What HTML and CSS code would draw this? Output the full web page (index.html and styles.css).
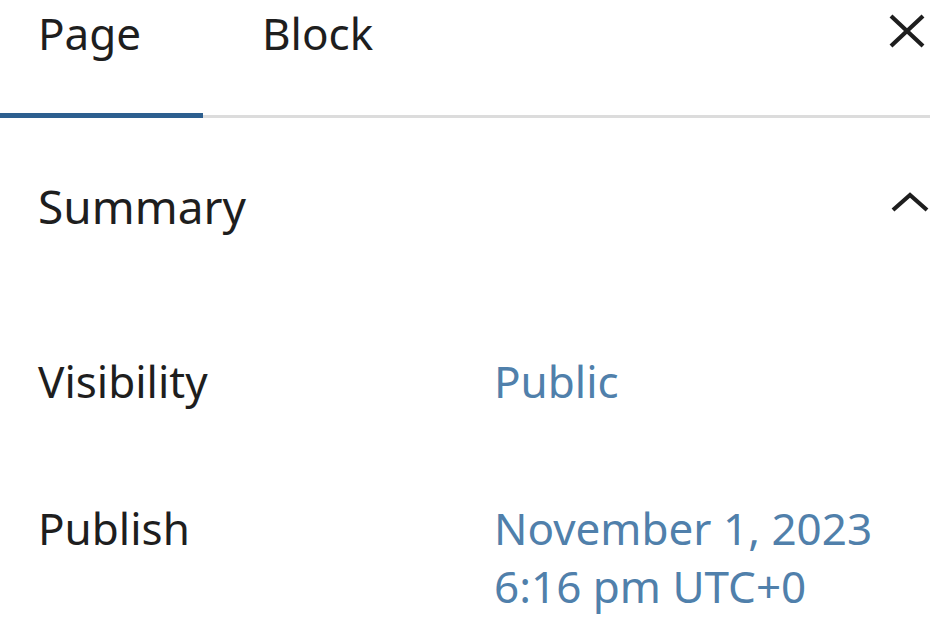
FILE: index.html
```html
<!DOCTYPE html>
<html lang="en">
<head>
  <meta charset="UTF-8" /><meta name="viewport" content="width=device-width, initial-scale=1.0"/>
  <title>Page settings</title>
  <link rel="stylesheet" href="styles.css">
</head>
<body>
  <header class="tabs">
    <button class="tab active">Page</button>
    <button class="tab">Block</button>
    <button class="close" aria-label="Close settings">
      <svg viewBox="0 0 36 34" width="36" height="34"><path d="M2 2 L34 32 M34 2 L2 32" stroke="#1e1e1e" stroke-width="4.2" fill="none"/></svg>
    </button>
  </header>

  <section class="panel">
    <div class="panel-head">
      <h2>Summary</h2>
      <svg class="chevron" viewBox="0 0 40 20" width="40" height="20"><path d="M3 18 L20 3 L37 18" stroke="#1e1e1e" stroke-width="4.2" fill="none"/></svg>
    </div>

    <div class="rows">
      <div class="row">
        <span class="label">Visibility</span>
        <a class="value" href="#">Public</a>
      </div>
      <div class="row">
        <span class="label">Publish</span>
        <a class="value" href="#">November 1, 2023<br>6:16 pm UTC+0</a>
      </div>
    </div>
  </section>
</body>
</html>
```

FILE: styles.css
```css
* { box-sizing: border-box; margin: 0; padding: 0; }

body {
  background: #fff;
  color: #1e1e1e;
  font-family: 'Noto Sans', sans-serif;
  font-size: 44px;
  overflow: hidden;
}

.tabs {
  display: flex;
  align-items: flex-start;
  height: 118px;
  border-bottom: 3px solid #dcdcdc;
}

.tab {
  background: none;
  border: none;
  font: inherit;
  color: #1e1e1e;
  padding: 0 38px 52px;
  height: 118px;
  line-height: 66px;
  text-align: left;
}

.tab + .tab {
  margin-left: 21px;
}

.tab.active {
  width: 203px;
  border-bottom: 5px solid #2d5f8f;
  margin-bottom: -3px;
  height: 118px;
}

.close {
  margin-left: auto;
  margin-top: 14px;
  margin-right: 5px;
  background: none;
  border: none;
  display: flex;
}

.panel {
  padding: 0 0 0 38px;
}

.panel-head {
  display: flex;
  justify-content: space-between;
  align-items: center;
  height: 176px;
}

.panel-head h2 {
  font-size: 46px;
  font-weight: 400;
}

.chevron {
  margin-bottom: 8px;
}

.rows {
  padding-top: 58px;
}

.row {
  display: flex;
  line-height: 58px;
  margin-bottom: 89px;
}

.label {
  width: 456px;
}

.value {
  color: #5080ab;
  text-decoration: none;
}
```
